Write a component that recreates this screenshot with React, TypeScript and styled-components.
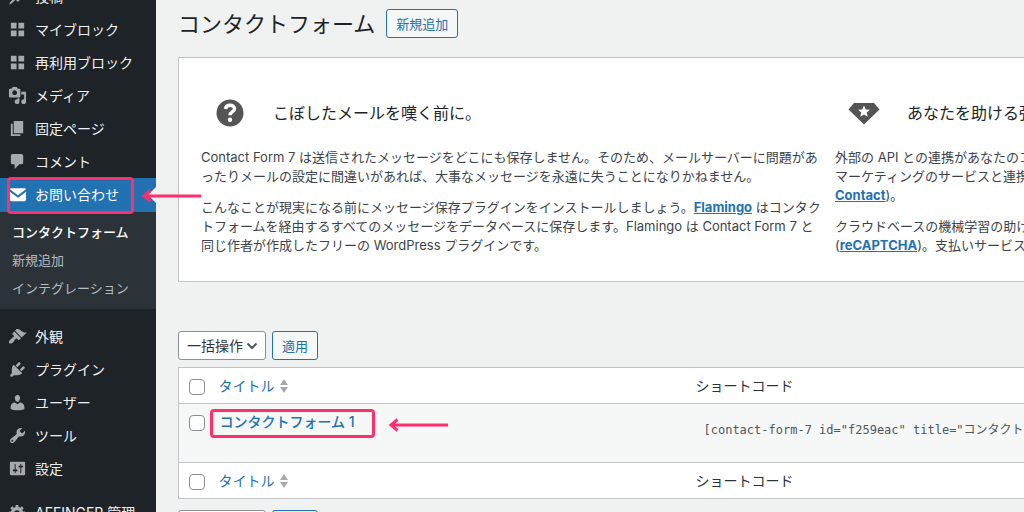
import React from "react";
import styled, { createGlobalStyle, css } from "styled-components";

const GlobalStyle = createGlobalStyle`
  *, *::before, *::after { box-sizing: border-box; }
  body {
    margin: 0;
    background: #f0f1f1;
    color: #3c434a;
    font-family: Inter, "Noto Sans CJK JP", sans-serif;
    font-size: 13px;
    line-height: 19px;
  }
  h1, h2, p, ul { margin: 0; padding: 0; }
  ul { list-style: none; }
  button, input, select { font-family: inherit; }
`;

const pink = "#ff2f6e";

const Page = styled.div`
  display: flex;
  height: 100vh;
  overflow: hidden;
`;

const Sidebar = styled.nav`
  position: relative;
  z-index: 1;
  flex: 0 0 156px;
  background: #1d2327;
`;

const Menu = styled.ul`
  margin-top: -20px;
`;

const MenuItem = styled.li<{ $spaced?: boolean }>`
  position: relative;
  margin-top: ${(p) => (p.$spaced ? "11px" : "0")};
`;

const MenuLink = styled.a<{ $current?: boolean }>`
  display: flex;
  align-items: center;
  gap: 8px;
  height: 33px;
  padding: 0 0 1px 8px;
  color: #f0f0f1;
  font-size: 14px;
  text-decoration: none;
  white-space: nowrap;
  svg { flex: none; fill: #a7aaad; }
  ${(p) =>
    p.$current &&
    css`
      height: 34px;
      background: #2271b1;
      color: #fff;
      svg { fill: #fff; }
      &::after {
        content: "";
        margin-left: auto;
        border: 8px solid transparent;
        border-right-color: #f0f1f1;
      }
    `}
`;

const Submenu = styled.ul`
  padding: 6px 0 7px;
  background: #2c3338;
`;

const SubLink = styled.a<{ $current?: boolean }>`
  display: block;
  padding-left: 12px;
  line-height: 28px;
  color: ${(p) => (p.$current ? "#fff" : "#b5babf")};
  font-weight: ${(p) => (p.$current ? 500 : 400)};
  text-decoration: none;
`;

const MenuMark = styled.span`
  position: absolute;
  top: -1px;
  left: 7px;
  width: 127px;
  height: 37px;
  border: 3px solid ${pink};
  border-radius: 4px;
  pointer-events: none;
`;

const RowMark = styled(MenuMark)`
  top: 5px;
  left: 0;
  width: 165px;
  height: 29px;
`;

const ArrowSvg = styled.svg<{ $top: number; $left: number }>`
  position: absolute;
  top: ${(p) => p.$top}px;
  left: ${(p) => p.$left}px;
  fill: none;
  stroke: ${pink};
  stroke-width: 3;
  pointer-events: none;
`;

const Main = styled.main`
  flex: 1;
  min-width: 0;
  overflow: hidden;
  padding: 9px 0 0 22px;
`;

const Wide = styled.div`
  min-width: 1294px;
`;

const TitleBar = styled.header`
  display: flex;
  align-items: center;
  gap: 11px;
  height: 29px;
  margin-bottom: 19px;
`;

const Title = styled.h1`
  color: #1d2327;
  font-size: 22px;
  font-weight: 400;
  line-height: 28px;
`;

const Button = styled.button`
  height: 29px;
  padding: 0 9px;
  border: 1px solid #2271b1;
  border-radius: 3px;
  background: #f6f7f7;
  color: #2271b1;
  font-size: 13px;
`;

const Panel = styled.section`
  display: grid;
  grid-template-columns: minmax(0, 1fr) minmax(0, 1fr);
  column-gap: 20px;
  padding: 35px 22px 26px;
  border: 1px solid #c3c4c7;
  background: #fff;
`;

const PanelHead = styled.div`
  display: flex;
  align-items: center;
  height: 40px;
  margin-bottom: 15px;
  svg { flex: none; width: 32px; height: 32px; margin: 0 27px 0 13px; }
`;

const PanelTitle = styled.h2`
  color: #1d2327;
  font-size: 16px;
  font-weight: 400;
  line-height: 24px;
  white-space: nowrap;
`;

const Paragraph = styled.p`
  white-space: nowrap;
  & + & { margin-top: 12px; }
`;

const StrongLink = styled.a`
  color: #2271b1;
  font-weight: 700;
`;

const Actions = styled.div<{ $gap: number }>`
  display: flex;
  gap: 6px;
  margin-top: ${(p) => p.$gap}px;
`;

const SelectBox = styled.label`
  display: grid;
  align-items: center;
  width: 88px;
  height: 29px;
  border: 1px solid #8c8f94;
  border-radius: 3px;
  background: #fff;
  > * { grid-area: 1 / 1; }
  svg { justify-self: end; margin-right: 7px; pointer-events: none; }
`;

const Select = styled.select`
  appearance: none;
  width: 100%;
  height: 27px;
  padding: 0 20px 0 8px;
  border: 0;
  background: transparent;
  color: #2c3338;
  font-size: 14px;
`;

const Table = styled.table`
  width: 100%;
  margin-top: 7px;
  border: 1px solid #c3c4c7;
  border-collapse: collapse;
  table-layout: fixed;
  background: #fff;
  font-size: 14px;
  tbody { background: #f6f7f7; }
  tr + tr, tbody tr, tfoot tr { border-top: 1px solid #c3c4c7; }
  th, td { padding: 0; text-align: left; font-weight: 400; }
`;

const HeadCell = styled.th<{ $width?: number }>`
  width: ${(p) => (p.$width ? `${p.$width}px` : "auto")};
  height: 36px;
  color: #2c3338;
`;

const BodyCell = styled.td`
  position: relative;
  height: 59px;
  vertical-align: top;
`;

const Check = styled.input`
  display: block;
  appearance: none;
  width: 16px;
  height: 16px;
  margin: 2px 0 0 10px;
  border: 1px solid #8c8f94;
  border-radius: 4px;
  background: #fff;
  tbody & { margin-top: 11px; }
`;

const SortLink = styled.a`
  display: flex;
  align-items: center;
  gap: 4px;
  padding-left: 9px;
  color: #2271b1;
  text-decoration: none;
  svg { fill: #a7aaad; }
`;

const RowLink = styled.a`
  display: block;
  padding: 8px 0 0 10px;
  color: #2271b1;
  font-weight: 500;
  text-decoration: none;
`;

const Shortcode = styled.input`
  width: 100%;
  height: 29px;
  margin-top: 10px;
  padding: 0 8px;
  border: 0;
  background: transparent;
  color: #50575e;
  font-family: "DejaVu Sans Mono", "Noto Sans CJK JP", monospace;
  font-size: 12px;
`;

const paths: Record<string, string> = {
  post: "M10.44 3.02l1.82-1.82 6.36 6.35-1.83 1.82c-1.05-.68-2.48-.57-3.41.36l-.75.75c-.92.93-1.04 2.35-.35 3.41l-1.83 1.82-2.41-2.41-2.8 2.79c-.42.42-3.38 2.71-3.8 2.29s1.86-3.39 2.28-3.81l2.79-2.79L4.1 9.36l1.83-1.82c1.05.69 2.48.57 3.4-.36l.75-.75c.93-.92 1.05-2.35.36-3.41z",
  blocks: "M3 3h6v6H3zM11 3h6v6h-6zM3 11h6v6H3zM11 11h6v6h-6z",
  media: "M13 11V4c0-.55-.45-1-1-1h-1.67L9 1H5L3.67 3H2c-.55 0-1 .45-1 1v7c0 .55.45 1 1 1h10c.55 0 1-.45 1-1zM7 4.5c1.38 0 2.5 1.12 2.5 2.5S8.38 9.5 7 9.5 4.5 8.38 4.5 7 5.62 4.5 7 4.5zM14 6h5v10.5c0 1.38-1.12 2.5-2.5 2.5S14 17.88 14 16.5s1.12-2.5 2.5-2.5c.17 0 .34.02.5.05V9h-3V6zm-4 8.05V13h2v3.5c0 1.38-1.12 2.5-2.5 2.5S7 17.88 7 16.5 8.12 14 9.5 14c.17 0 .34.02.5.05z",
  page: "M6 15V2h10v13H6zm-1 1h8v2H3V5h2v11z",
  comments: "M5 2h9c1.1 0 2 .9 2 2v7c0 1.1-.9 2-2 2h-2l-5 5v-5H5c-1.1 0-2-.9-2-2V4c0-1.1.9-2 2-2z",
  mail: "M4 3.5h13.5c.8 0 1.5.7 1.5 1.5v10.5c0 .8-.7 1.5-1.5 1.5h-14c-.8 0-1.5-.7-1.5-1.5V7l8.500 6.500L19 7V4.500l-8.500 6.300L2 4.500c0-.6.9-1 2-1z",
  appearance: "M14.48 11.06L7.41 3.99l1.5-1.5c.5-.56 2.3-.47 3.51.32 1.21.8 1.43 1.28 2.91 2.1 1.18.64 2.45 1.26 4.45.85zm-.71.71L6.7 4.7 4.93 6.47c-.39.39-.39 1.02 0 1.41l1.06 1.06c.39.39.39 1.03 0 1.42-.6.6-1.43 1.11-2.21 1.69-.35.26-.7.53-1.01.84C1.43 14.23.4 16.08 1.4 17.07c.99 1 2.84-.03 4.18-1.36.31-.31.58-.66.85-1.02.57-.78 1.08-1.61 1.69-2.21.39-.39 1.02-.39 1.41 0l1.06 1.06c.39.39 1.02.39 1.41 0z",
  plugins: "M13.11 4.36L9.87 7.6 8 5.73l3.24-3.24c.35-.34 1.05-.2 1.56.32.52.51.66 1.21.31 1.55zm-8 1.77l.91-1.12 9.01 9.01-1.19.84c-.71.71-2.63 1.16-3.82 1.16H6.14L4.9 17.26c-.59.59-1.54.59-2.12 0-.59-.58-.59-1.53 0-2.12l1.24-1.24v-3.88c0-1.13.4-3.19 1.09-3.89zm7.26 3.97l3.24-3.24c.34-.35 1.04-.21 1.55.31.52.51.66 1.21.31 1.55l-3.24 3.25z",
  users: "M10 9.25c-2.27 0-2.73-3.44-2.73-3.44C7 4.02 7.82 2 9.97 2c2.16 0 2.98 2.02 2.71 3.81 0 0-.41 3.44-2.68 3.44zm0 2.57L12.72 10c2.39 0 4.52 2.33 4.52 4.53v2.49s-3.65 1.13-7.24 1.13c-3.65 0-7.24-1.13-7.24-1.13v-2.49c0-2.25 1.94-4.48 4.47-4.48z",
  tools: "M16.68 9.77c-1.34 1.34-3.3 1.67-4.95.99l-5.41 6.52c-.99.99-2.59.99-3.58 0s-.99-2.59 0-3.57l6.52-5.42c-.68-1.65-.35-3.61.99-4.95 1.28-1.28 3.12-1.62 4.72-1.06l-2.89 2.89 2.82 2.82 2.86-2.87c.53 1.58.18 3.39-1.08 4.65zM3.81 16.21c.4.39 1.04.39 1.43 0 .4-.4.4-1.04 0-1.43-.39-.4-1.03-.4-1.43 0-.39.39-.39 1.03 0 1.43z",
  settings: "M18 16V4c0-.55-.45-1-1-1H3c-.55 0-1 .45-1 1v12c0 .55.45 1 1 1h14c.55 0 1-.45 1-1zM8 11h1c.55 0 1 .45 1 1s-.45 1-1 1H8v1.5c0 .28-.22.5-.5.5s-.5-.22-.5-.5V13H6c-.55 0-1-.45-1-1s.45-1 1-1h1V5.5c0-.28.22-.5.5-.5s.5.22.5.5V11zm5-2h-1c-.55 0-1-.45-1-1s.45-1 1-1h1V5.5c0-.28.22-.5.5-.5s.5.22.5.5V7h1c.55 0 1 .45 1 1s-.45 1-1 1h-1v5.5c0 .28-.22.5-.5.5s-.5-.22-.5-.5V9z",
  generic: "M18 12h-2.18c-.17.7-.44 1.35-.81 1.93l1.54 1.54-2.1 2.1-1.54-1.54c-.58.36-1.23.63-1.91.79V19H8v-2.18c-.68-.16-1.33-.43-1.91-.79l-1.54 1.54-2.12-2.12 1.54-1.54c-.36-.58-.63-1.23-.79-1.91H1V9.03h2.17c.16-.7.44-1.35.8-1.94L2.43 5.55l2.1-2.1 1.54 1.54c.58-.37 1.24-.64 1.93-.81V2h3v2.18c.68.16 1.33.43 1.91.79l1.54-1.54 2.12 2.12-1.54 1.54c.36.59.64 1.24.8 1.94H18V12zm-8.5 1.5c1.66 0 3-1.34 3-3s-1.34-3-3-3-3 1.34-3 3 1.34 3 3 3z",
};

const Icon = ({ name }: { name: string }) => (
  <svg width="19" height="19" viewBox="0 0 20 20" aria-hidden="true">
    <path fillRule="evenodd" d={paths[name]} />
  </svg>
);

const Arrow = ({ top, left }: { top: number; left: number }) => (
  <ArrowSvg $top={top} $left={left} width="60" height="14" viewBox="0 0 60 14" aria-hidden="true">
    <path d="M60 7H3M9.5 1.5L3 7l6.5 5.5" />
  </ArrowSvg>
);

const SortArrows = () => (
  <svg width="10" height="14" viewBox="0 0 10 14" aria-hidden="true">
    <path d="M5 0l4 6H1zM5 14L1 8h8z" />
  </svg>
);

const upper = [
  ["post", "投稿"],
  ["blocks", "マイブロック"],
  ["blocks", "再利用ブロック"],
  ["media", "メディア"],
  ["page", "固定ページ"],
  ["comments", "コメント"],
];

const lower = [
  ["appearance", "外観"],
  ["plugins", "プラグイン"],
  ["users", "ユーザー"],
  ["tools", "ツール"],
  ["settings", "設定"],
  ["generic", "AFFINGER 管理"],
];

const BulkActions = ({ gap }: { gap: number }) => (
  <Actions $gap={gap}>
    <SelectBox>
      <Select aria-label="一括操作">
        <option>一括操作</option>
      </Select>
      <svg width="12" height="8" viewBox="0 0 12 8" fill="none" stroke="#50575e" strokeWidth="2" aria-hidden="true">
        <path d="M1.5 1.5L6 6l4.5-4.5" />
      </svg>
    </SelectBox>
    <Button type="button">適用</Button>
  </Actions>
);

const HeadRow = () => (
  <tr>
    <HeadCell $width={31}>
      <Check type="checkbox" aria-label="すべて選択" />
    </HeadCell>
    <HeadCell $width={486}>
      <SortLink href="#sort">
        タイトル
        <SortArrows />
      </SortLink>
    </HeadCell>
    <HeadCell>ショートコード</HeadCell>
  </tr>
);

export default function App() {
  return (
    <>
      <GlobalStyle />
      <Page>
        <Sidebar>
          <Menu>
            {upper.map(([icon, label]) => (
              <MenuItem key={label}>
                <MenuLink href="#menu">
                  <Icon name={icon} />
                  {label}
                </MenuLink>
              </MenuItem>
            ))}
            <MenuItem>
              <MenuLink href="#contact" $current>
                <Icon name="mail" />
                お問い合わせ
              </MenuLink>
              <MenuMark />
              <Arrow top={11} left={141} />
              <Submenu>
                <li><SubLink href="#forms" $current>コンタクトフォーム</SubLink></li>
                <li><SubLink href="#new">新規追加</SubLink></li>
                <li><SubLink href="#integration">インテグレーション</SubLink></li>
              </Submenu>
            </MenuItem>
            {lower.map(([icon, label]) => (
              <MenuItem key={label} $spaced={icon === "appearance" || icon === "generic"}>
                <MenuLink href="#menu">
                  <Icon name={icon} />
                  {label}
                </MenuLink>
              </MenuItem>
            ))}
          </Menu>
        </Sidebar>
        <Main>
          <Wide>
            <TitleBar>
              <Title>コンタクトフォーム</Title>
              <Button type="button">新規追加</Button>
            </TitleBar>
            <Panel>
              <div>
                <PanelHead>
                  <svg viewBox="0 0 32 32" aria-hidden="true">
                    <circle cx="16" cy="16" r="13.5" fill="#555" />
                    <path d="M11.5 12c.4-5 9-5 9-.3 0 3.300-4.500 3.200-4.500 6.600" fill="none" stroke="#fff" strokeWidth="3.4" />
                    <circle cx="16" cy="22.800" r="2.200" fill="#fff" />
                  </svg>
                  <PanelTitle>こぼしたメールを嘆く前に。</PanelTitle>
                </PanelHead>
                <Paragraph>
                  Contact Form 7 は送信されたメッセージをどこにも保存しません。そのため、メールサーバーに問題があ
                  <br />
                  ったりメールの設定に間違いがあれば、大事なメッセージを永遠に失うことになりかねません。
                </Paragraph>
                <Paragraph>
                  こんなことが現実になる前にメッセージ保存プラグインをインストールしましょう。
                  <StrongLink href="#flamingo">Flamingo</StrongLink> はコンタク
                  <br />
                  トフォームを経由するすべてのメッセージをデータベースに保存します。Flamingo は Contact Form 7 と
                  <br />
                  同じ作者が作成したフリーの WordPress プラグインです。
                </Paragraph>
              </div>
              <div>
                <PanelHead>
                  <svg viewBox="0 0 32 32" aria-hidden="true">
                    <path d="M6 6h20l5.500 6.500L16 27.500.5 12.500z" fill="#555" />
                    <path d="M16 8.500l1.700 3.900 4.200.4-3.200 2.800 1 4.100-3.700-2.200-3.700 2.200 1-4.100-3.200-2.800 4.200-.4z" fill="#fff" />
                  </svg>
                  <PanelTitle>あなたを助ける強い味方。</PanelTitle>
                </PanelHead>
                <Paragraph>
                  外部の API との連携があなたのコンタクト
                  <br />
                  マーケティングのサービスと連携
                  <br />
                  <StrongLink href="#constant">Contact</StrongLink>)。
                </Paragraph>
                <Paragraph>
                  クラウドベースの機械学習の助け
                  <br />
                  (<StrongLink href="#recaptcha">reCAPTCHA</StrongLink>)。支払いサービスを
                </Paragraph>
              </div>
            </Panel>
            <BulkActions gap={49} />
            <Table>
              <thead><HeadRow /></thead>
              <tbody>
                <tr>
                  <BodyCell>
                    <Check type="checkbox" aria-label="コンタクトフォーム 1 を選択" />
                  </BodyCell>
                  <BodyCell>
                    <RowLink href="#form-1">コンタクトフォーム 1</RowLink>
                    <RowMark />
                    <Arrow top={14} left={178} />
                  </BodyCell>
                  <BodyCell>
                    <Shortcode
                      readOnly
                      aria-label="ショートコード"
                      value={'[contact-form-7 id="f259eac" title="コンタクトフォーム 1"]'}
                    />
                  </BodyCell>
                </tr>
              </tbody>
              <tfoot><HeadRow /></tfoot>
            </Table>
            <BulkActions gap={11} />
          </Wide>
        </Main>
      </Page>
    </>
  );
}
